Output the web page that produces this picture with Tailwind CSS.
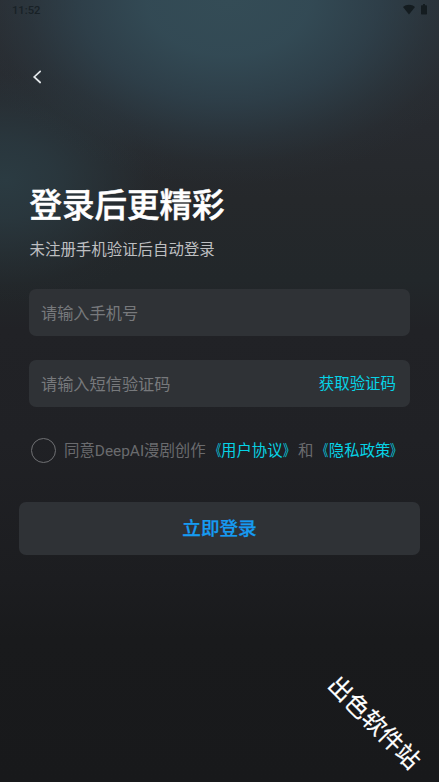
<!DOCTYPE html>
<html lang="zh-CN">
<head>
<meta charset="utf-8">
<title>登录</title>
<script src="https://cdn.jsdelivr.net/npm/@tailwindcss/browser@4"></script>
</head>
<body class="bg-[#191a1c]">
<main class="relative flex h-[782px] w-[439px] flex-col overflow-hidden bg-[radial-gradient(ellipse_270px_185px_at_228px_0px,#344c56_0%,#334b56f2_30%,#304652b3_55%,#2c3c4573_75%,#2a353b33_88%,#282b3000_100%),radial-gradient(ellipse_170px_125px_at_5px_180px,#2b3b42_0%,#2a3940d9_30%,#28343a80_62%,#272d3226_84%,#26292d00_100%),linear-gradient(180deg,#2a2e34_0px,#272a2f_130px,#25282b_200px,#22272a_280px,#212226_330px,#202125_440px,#1c1d20_580px,#191a1c_640px,#18191b_782px)] font-[Roboto,'Noto_Sans_CJK_SC',sans-serif]">
  <header class="flex h-5 items-center justify-between pr-3 pl-3">
    <span class="pt-px text-[11.200px] leading-5 font-medium text-[#182126]">11:52</span>
    <div class="flex items-center gap-1.5">
      <svg class="h-3 w-3" viewBox="0 0 12 12" fill="#141c20"><path d="M0 3C3.400.1 8.600.1 12 3L6 10.500Z"/></svg>
      <svg class="h-3 w-[6px]" viewBox="0 0 6 12" fill="#141c20"><path d="M2 0h2v1.200h1.300q.7 0 .7.7v7.900q0 .7-.7.7H.7q-.7 0-.7-.7V1.900q0-.7.7-.7H2Z"/></svg>
    </div>
  </header>
  <nav class="mt-[46px] flex h-[22px] items-center pl-[30px]">
    <button aria-label="返回" class="flex"><svg class="h-[14px] w-[14px]" viewBox="0 0 14 14" fill="none" stroke="#e3e7ea" stroke-width="1.700" stroke-linecap="round"><path d="M10.200 1.300 4.200 7l6 5.500"/></svg></button>
  </nav>
  <section class="mt-[94px] px-[29.500px]">
    <h1 class="h-[48px] whitespace-nowrap text-[32.500px] leading-[48px] font-medium text-white [-webkit-text-stroke:0.5px_white]">登录后更精彩</h1>
    <p class="mt-[8px] h-6 whitespace-nowrap text-[15.450px] leading-6 text-[#bebfc1]">未注册手机验证后自动登录</p>
  </section>
  <form class="mt-[27px] flex flex-col">
    <div class="mx-[29px] flex h-[47px] items-center rounded-[7px] bg-[#2f3236] px-3 pt-[3px] text-[16.200px] text-[#77797c]">请输入手机号</div>
    <div class="mx-[29px] mt-6 flex h-[47px] items-center justify-between rounded-[7px] bg-[#2f3236] pt-[3px] pr-[14px] pl-3 text-[16.200px] text-[#77797c]">
      <span>请输入短信验证码</span>
      <span class="text-[15.450px] text-[#06d3e6]">获取验证码</span>
    </div>
    <div class="mt-[30px] flex h-[26px] items-center pl-[31px] whitespace-nowrap text-[15.400px] text-[#6a6b6e]">
      <span class="mr-2 h-[25px] w-[25px] shrink-0 rounded-full border border-[#6f7073]"></span>
      <span class="pt-[3px]">同意DeepAI漫剧创作<span class="text-[#06d3e6]"><span class="inline-block origin-right scale-x-70">《</span>用户协议<span class="inline-block origin-left scale-x-75">》</span></span>和<span class="text-[#06d3e6]"><span class="inline-block origin-right scale-x-70">《</span>隐私政策<span class="inline-block origin-left scale-x-75">》</span></span></span>
    </div>
    <button type="button" class="mx-[19px] mt-[39px] h-[53px] rounded-[7px] bg-[#2f3236] pt-[3px] text-[18.600px] font-medium text-[#169bf2] [-webkit-text-stroke:0.25px_#169bf2]">立即登录</button>
  </form>
  <div class="absolute top-[705px] left-[304px] w-[140px] rotate-45 text-center text-[23.800px] leading-9 whitespace-nowrap text-white [-webkit-text-stroke:0.2px_white]">出色软件站</div>
</main>
</body>
</html>
